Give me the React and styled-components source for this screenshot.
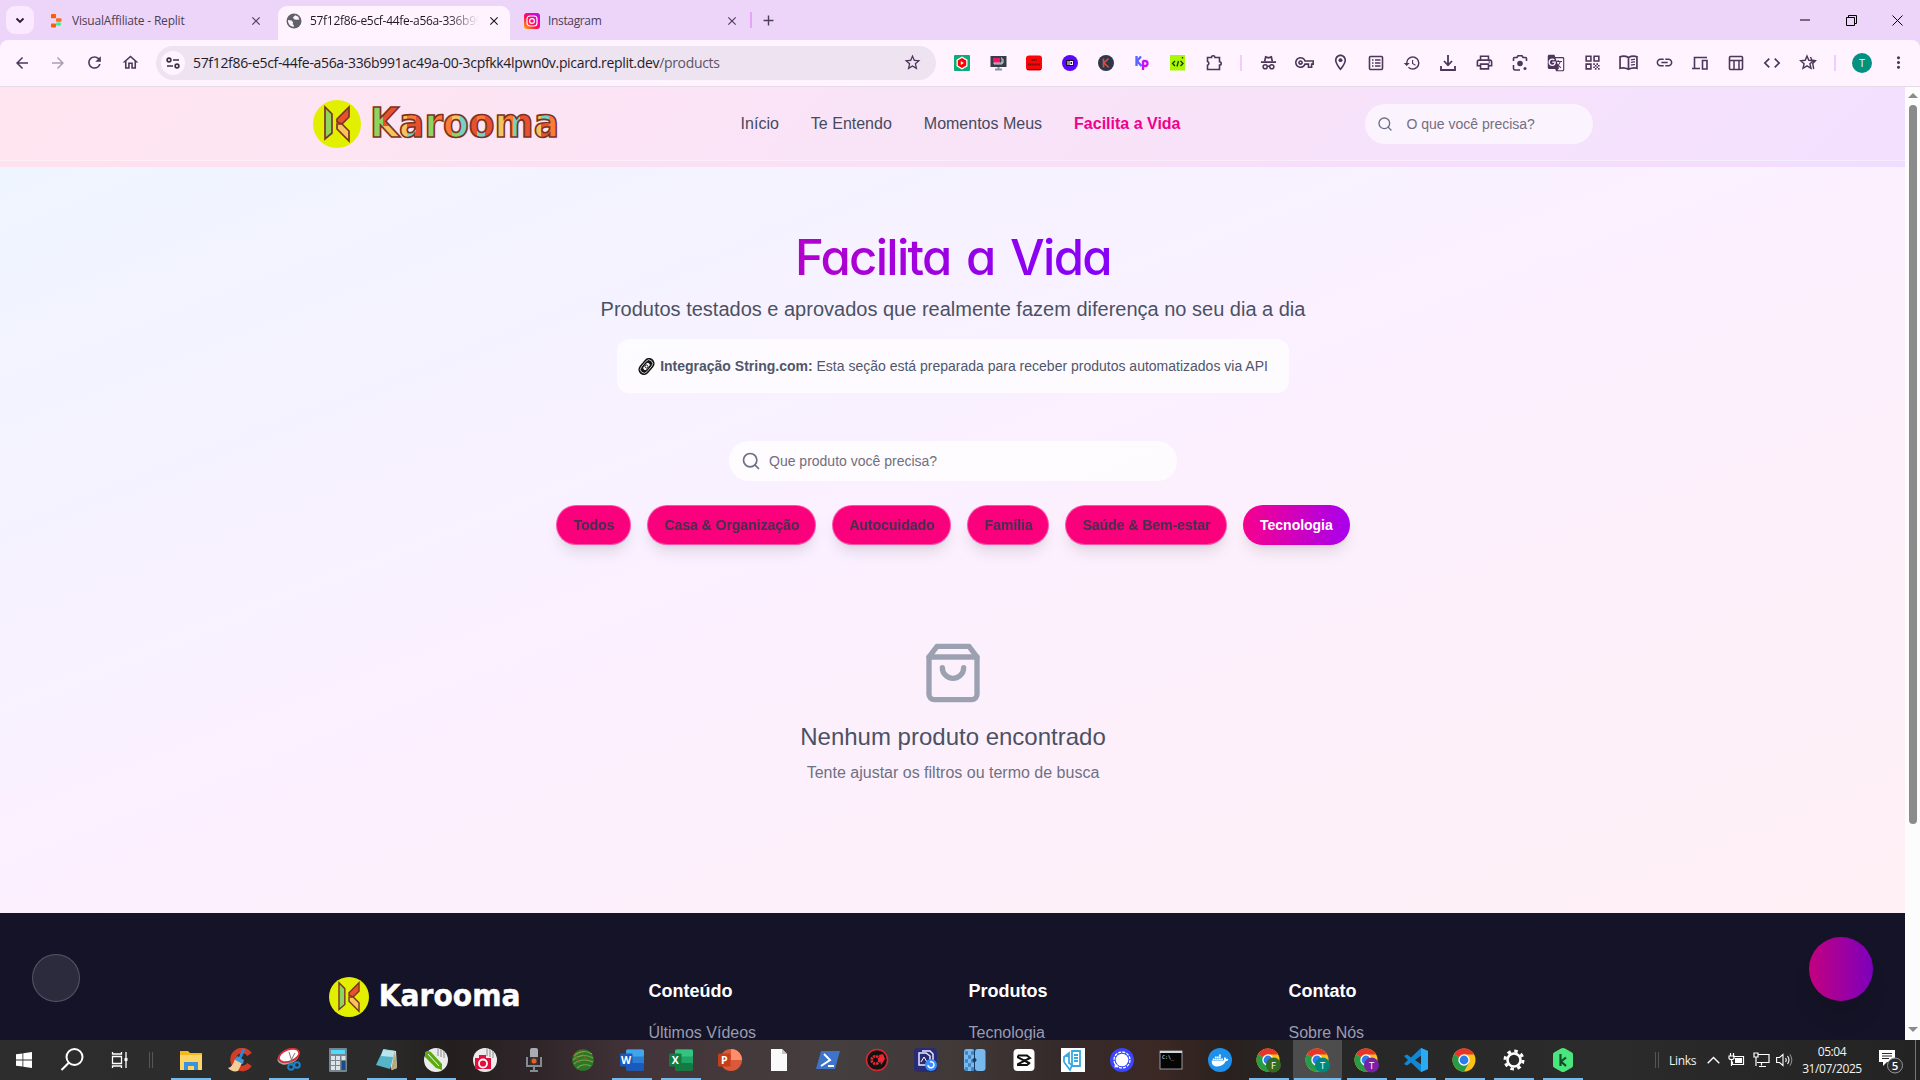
import React from "react";
import styled, { createGlobalStyle, css } from "styled-components";
import {
  MdArrowBack,
  MdArrowForward,
  MdRefresh,
  MdOutlineHome,
  MdOutlineVpnKey,
  MdOutlineLocationOn,
  MdHistory,
  MdOutlinePrint,
  MdGTranslate,
  MdQrCode,
  MdLink,
  MdCode,
  MdStarBorder,
  MdMoreVert,
  MdAdd,
  MdClose,
} from "react-icons/md";
import { FaDocker } from "react-icons/fa";

const ui = `"Open Sans", "Noto Sans", sans-serif`;
const arial = `"Liberation Sans", Arial, sans-serif`;

const Global = createGlobalStyle`
  * { box-sizing: border-box; }
  html, body { margin: 0; padding: 0; overflow: hidden; background: #fff; }
  p, h1, h2, h3 { margin: 0; font-weight: 400; }
  svg { display: block; flex: none; }
`;

const Screen = styled.div`
  width: 1920px;
  height: 1080px;
  display: flex;
  flex-direction: column;
  overflow: hidden;
  font-family: ${arial};
`;

/* ---------- browser frame ---------- */

const TabStrip = styled.div`
  height: 40px;
  flex: none;
  display: flex;
  align-items: flex-end;
  padding-left: 6px;
  background: #ecd5f8;
  font-family: ${ui};
`;
const TabMenu = styled.div`
  width: 28px;
  height: 28px;
  margin: 0 8px 6px 0;
  border-radius: 9px;
  background: #fbeaff;
  display: grid;
  place-items: center;
`;
const Tab = styled.div`
  width: ${(p) => p.$w}px;
  height: 34px;
  padding: 0 ${(p) => p.$end}px 5px ${(p) => p.$pad}px;
  display: flex;
  align-items: center;
  color: #4d3d57;
  ${(p) =>
    p.$active &&
    css`
      background: #fef3ff;
      border-radius: 9px 9px 0 0;
      color: #1f1a22;
    `}
`;
const TabLabel = styled.span`
  flex: 1;
  margin-left: ${(p) => p.$gap || 8}px;
  margin-right: 8px;
  overflow: hidden;
  white-space: nowrap;
  font-size: 12px;
  line-height: 18px;
  letter-spacing: ${(p) => p.$track || 0}px;
  ${(p) => p.$fade && css`mask-image: linear-gradient(90deg, #000 82%, transparent);`}
`;
const StripLine = styled.div`
  width: 2px;
  height: 16px;
  margin-bottom: 12px;
  background: #e3a6f7;
`;
const NewTab = styled.div`
  width: 32px;
  height: 40px;
  display: grid;
  place-items: center;
  color: #4d3d57;
`;
const WindowButtons = styled.div`
  margin-left: auto;
  height: 40px;
  display: flex;
`;
const WindowButton = styled.div`
  width: 46px;
  display: grid;
  place-items: center;
`;

const ToolbarBack = styled.div`
  height: 47px;
  flex: none;
  background: #ecd5f8;
`;
const Toolbar = styled.div`
  height: 47px;
  padding: 0 4px 1px 4px;
  display: flex;
  align-items: center;
  background: #fef3ff;
  border-bottom: 1px solid #e5dbe9;
  border-radius: 8px 8px 0 0;
  color: #4d3659;
  font-family: ${ui};
`;
const ToolCell = styled.div`
  width: 36px;
  height: 36px;
  flex: none;
  display: grid;
  place-items: center;
  opacity: ${(p) => (p.$dim ? 0.45 : 1)};
`;
const Omnibox = styled.div`
  width: 780px;
  height: 34px;
  margin: 0 8px 0 8px;
  padding: 0 14px 0 5px;
  display: flex;
  align-items: center;
  border-radius: 17px;
  background: #eee3f0;
`;
const SiteInfo = styled.div`
  width: 24px;
  height: 24px;
  border-radius: 50%;
  background: #fef3ff;
  display: grid;
  place-items: center;
`;
const Url = styled.div`
  flex: 1;
  margin-left: 8px;
  font-size: 14px;
  letter-spacing: -0.33px;
  color: #241c28;
  white-space: nowrap;
  span { color: #5f5366; }
`;
const ToolLine = styled.div`
  width: 2px;
  height: 16px;
  margin: 0 ${(p) => p.$r}px 0 ${(p) => p.$l}px;
  background: #f0cdfc;
`;
const Avatar = styled.div`
  width: 20px;
  height: 20px;
  border-radius: 50%;
  background: #009180;
  color: #e8fff9;
  font-size: 11px;
  line-height: 20px;
  text-align: center;
`;

/* ---------- site ---------- */

const Viewport = styled.div`
  height: 953px;
  flex: none;
  display: flex;
`;
const Page = styled.div`
  width: 1905px;
  height: 953px;
  overflow: hidden;
  position: relative;
`;
const Header = styled.header`
  height: 80px;
  background: linear-gradient(135deg, #ffe2ee, #f9e0f7 50%, #f1ddff);
`;
const HeaderRow = styled.div`
  height: 74px;
  padding: 0 312.5px;
  display: flex;
  align-items: center;
  border-bottom: 1px solid rgba(255, 255, 255, 0.35);
  background: rgba(255, 255, 255, 0.1);
`;
const Logo = styled.div`
  display: flex;
  align-items: center;
  gap: 12px;
`;
const Nav = styled.nav`
  margin-left: auto;
  display: flex;
  gap: 32px;
`;
const NavItem = styled.a`
  font-size: 16px;
  line-height: 24px;
  color: ${(p) => (p.$active ? "#f0008c" : "#454a5e")};
  font-weight: ${(p) => (p.$active ? 700 : 400)};
`;
const HeaderSearch = styled.div`
  width: 228px;
  height: 40px;
  margin-left: 184px;
  padding-left: 12px;
  display: flex;
  align-items: center;
  gap: 14px;
  border-radius: 20px;
  background: rgba(255, 255, 255, 0.6);
  font-size: 14px;
  color: #746f80;
`;
const Main = styled.main`
  height: 746px;
  padding-top: 61px;
  padding-left: 1px;
  display: flex;
  flex-direction: column;
  align-items: center;
  background: linear-gradient(to bottom right, #eff5ff, #fcf0ff 50%, #fff0f5);
`;
const Title = styled.h1`
  height: 60px;
  width: 1216px;
  text-align: center;
  font-family: Inter, sans-serif;
  font-feature-settings: "cv11", "ss03";
  font-size: 49px;
  line-height: 59px;
  font-weight: 500;
  letter-spacing: -1.7px;
  word-spacing: 4px;
  color: transparent;
  background: linear-gradient(90deg, #ff0080 0%, #8a00f5 58%, #7c00ff 100%);
  background-clip: text;
  -webkit-background-clip: text;
`;
const Lead = styled.p`
  margin-top: 7px;
  font-size: 20px;
  line-height: 28px;
  color: #4b5163;
`;
const Notice = styled.div`
  width: 672px;
  height: 54px;
  margin-top: 16px;
  border-radius: 12px;
  background: rgba(255, 255, 255, 0.7);
  display: flex;
  align-items: center;
  justify-content: center;
  gap: 5px;
  font-size: 14px;
  color: #50566a;
`;
const ProductSearch = styled.div`
  width: 448px;
  height: 40px;
  margin-top: 48px;
  padding-left: 12px;
  display: flex;
  align-items: center;
  gap: 8px;
  border-radius: 20px;
  background: rgba(255, 255, 255, 0.75);
  font-size: 14px;
  color: #716f7c;
`;
const Filters = styled.div`
  margin-top: 24px;
  display: flex;
  gap: 16px;
`;
const Chip = styled.button`
  height: 40px;
  padding: 0 ${(p) => (p.$active ? 17 : 16)}px;
  border: 1px solid rgba(255, 160, 210, 0.5);
  border-radius: 20px;
  background: #fb007c;
  box-shadow: 0 10px 15px -3px rgba(0, 0, 0, 0.1), 0 4px 6px -4px rgba(0, 0, 0, 0.1);
  font: 700 14px ${arial};
  letter-spacing: -0.03px;
  color: #48304f;
  ${(p) =>
    p.$active &&
    css`
      border: 0;
      background: linear-gradient(90deg, #f7008e, #a800ee);
      color: #fff;
    `}
`;
const Empty = styled.section`
  margin-top: 96px;
  display: flex;
  flex-direction: column;
  align-items: center;
`;
const EmptyTitle = styled.h3`
  margin-top: 16px;
  font-size: 24px;
  line-height: 32px;
  color: #4b5163;
`;
const EmptyText = styled.p`
  margin-top: 8px;
  font-size: 16px;
  line-height: 24px;
  color: #6e7183;
`;
const Footer = styled.footer`
  height: 127px;
  padding: 64px 328.5px 0;
  background: #151327;
  display: grid;
  grid-template-columns: repeat(4, 288px);
  column-gap: 32px;
  color: #9a9cae;
  font-size: 16px;
  line-height: 24px;
`;
const FooterText = styled.p`
  margin-top: 18px;
  white-space: nowrap;
`;
const FooterHead = styled.h3`
  font-size: 18px;
  line-height: 28px;
  font-weight: 700;
  color: #fff;
  margin-bottom: 16px;
`;
const FooterLink = styled.p`
  line-height: 24px;
`;
const FloatLeft = styled.div`
  position: absolute;
  left: 32px;
  top: 867px;
  width: 48px;
  height: 48px;
  border-radius: 50%;
  background: rgba(255, 255, 255, 0.1);
  border: 1px solid rgba(255, 255, 255, 0.2);
`;
const FloatRight = styled.div`
  position: absolute;
  right: 32px;
  top: 850px;
  width: 64px;
  height: 64px;
  border-radius: 50%;
  background: linear-gradient(90deg, #c3007f, #7d00bd);
  box-shadow: 0 20px 25px -5px rgba(0, 0, 0, 0.1);
`;
const Scrollbar = styled.div`
  width: 15px;
  background: #fcfcfc;
  display: flex;
  flex-direction: column;
  align-items: center;
  padding: 6px 0 8px;
`;
const Thumb = styled.div`
  width: 8px;
  height: 719px;
  margin-top: 7px;
  margin-bottom: auto;
  border-radius: 4px;
  background: #8b8b8b;
`;

/* ---------- taskbar ---------- */

const Taskbar = styled.div`
  height: 40px;
  flex: none;
  display: flex;
  align-items: stretch;
  font-family: ${ui};
  color: #f3f3f3;
  background: linear-gradient(
    90deg,
    #2d2d2d 0, #2b2b2b 380px, #241f1e 450px, #30262a 540px, #433439 640px, #453e3e 830px,
    #403938 960px, #352a2a 1060px, #3b2824 1160px, #29211e 1230px, #262626 1290px, #2b2b2b 1600px, #232323 1920px
  );
`;
const SystemCell = styled.div`
  width: 48px;
  display: grid;
  place-items: center;
`;
const Grip = styled.div`
  width: 4px;
  height: 16px;
  margin: 12px 13px 0 5px;
  border: solid #565656;
  border-width: 0 1px;
`;
const AppCell = styled.div`
  width: 49px;
  display: flex;
  flex-direction: column;
  align-items: center;
  justify-content: space-between;
  padding-top: 8px;
  background: ${(p) => (p.$focus ? "#4d4d4d" : "transparent")};
`;
const Underline = styled.div`
  width: ${(p) => (p.$wide ? 47 : 40)}px;
  height: 2px;
  background: ${(p) => (p.$on ? "#76b9ed" : "transparent")};
`;
const Tray = styled.div`
  margin-left: auto;
  display: flex;
  align-items: center;
  width: 265px;
`;
const TrayGrip = styled(Grip)`
  margin: 0 10px 0 0;
`;
const Links = styled.div`
  width: 37px;
  font-size: 12px;
  letter-spacing: -0.3px;
`;
const TrayIcon = styled.div`
  width: ${(p) => p.$w || 24}px;
  display: grid;
  place-items: center;
`;
const Clock = styled.div`
  width: 70px;
  font-size: 12px;
  line-height: 17px;
  letter-spacing: -0.4px;
  text-align: center;
  display: grid;
`;
const ShowDesktop = styled.div`
  height: 40px;
  width: 1px;
  margin-left: auto;
  margin-right: 4px;
  background: #777;
`;

/* ---------- drawings ---------- */

function Mark({ size }) {
  return (
    <svg width={size} height={size} viewBox="0 0 48 48">
      <circle cx="24" cy="24" r="24" fill="#e3ef00" />
      <g stroke="#7c3326" strokeWidth="1.7" strokeLinejoin="miter">
        <polygon points="12,7 19,14 19,33 12,39" fill="#8fd45f" />
        <polygon points="36,7 36,17 29,24 24,22 24,19" fill="#e8512f" />
        <polygon points="24,24 29,24 36,31 36,41 24,29" fill="#f7c35c" />
      </g>
    </svg>
  );
}

const tiles = [
  [0, 0, 10, 40, "#8fd45f"], [10, 0, 16, 20, "#e8512f"], [10, 20, 16, 20, "#f7c35c"],
  [26, 0, 8, 40, "#f7c35c"], [34, 0, 9, 17, "#ff7a35"], [34, 17, 9, 7, "#e8512f"], [34, 24, 9, 16, "#74d3c6"], [43, 0, 9, 40, "#e8512f"],
  [52, 0, 8, 40, "#8fd45f"], [60, 0, 11, 40, "#ff7a35"],
  [71, 0, 8, 40, "#ff7a35"], [79, 0, 8, 18, "#f7c35c"], [79, 18, 8, 22, "#8fd45f"], [87, 0, 9, 40, "#74d3c6"],
  [96, 0, 8, 40, "#e8512f"], [104, 0, 8, 18, "#ff7a35"], [104, 18, 8, 22, "#74d3c6"], [112, 0, 9, 40, "#e8512f"],
  [121, 0, 10, 40, "#f7c35c"], [131, 0, 9, 40, "#ff7a35"], [140, 0, 7, 40, "#74d3c6"], [147, 0, 12, 40, "#e8512f"],
  [159, 0, 9, 40, "#f7c35c"], [168, 0, 8, 18, "#74d3c6"], [168, 18, 8, 22, "#e8512f"], [176, 0, 14, 40, "#ff7a35"],
];

const WordmarkSvg = styled.svg`
  overflow: visible;
`;

function Wordmark({ width, colored }) {
  return (
    <WordmarkSvg width={width} height={(width * 36) / 184} viewBox="0 0 184 36">
      <defs>
        <pattern id="mosaic" patternUnits="userSpaceOnUse" width="190" height="40">
          {tiles.map(([x, y, w, h, c], i) => (
            <rect key={i} x={x} y={y} width={w} height={h} fill={c} />
          ))}
        </pattern>
      </defs>
      <text
        x="-3"
        y={colored ? 31 : 29.5}
        textLength="189"
        lengthAdjust="spacingAndGlyphs"
        fontFamily="DejaVu Sans, sans-serif"
        fontWeight="700"
        fontSize="40"
        fill={colored ? "url(#mosaic)" : "#fff"}
        stroke={colored ? "#7c3326" : "#fff"}
        strokeWidth={colored ? 1.7 : 0.6}
      >
        Karooma
      </text>
    </WordmarkSvg>
  );
}

const Magnifier = ({ s = 16 }) => (
  <svg width={s} height={s} viewBox="0 0 24 24" fill="none" stroke="#697083" strokeWidth="2" strokeLinecap="round">
    <circle cx="11" cy="11" r="8" />
    <path d="m21 21-4.3-4.3" />
  </svg>
);

const ChainLink = () => (
  <svg width="17" height="17" viewBox="0 0 17 17" fill="none">
    <g transform="rotate(-50 8.5 8.5)">
      <rect x="-1" y="3" width="19" height="11" rx="5.500" fill="#111" />
      <rect x="1" y="4.800" width="15" height="7.400" rx="3.700" stroke="#fff" strokeWidth=".7" />
      <rect x="4" y="6" width="9" height="5" rx="2.500" fill="#fff" stroke="#111" />
      <circle cx="8.500" cy="8.500" r="1.500" stroke="#111" strokeWidth=".9" />
    </g>
  </svg>
);

const Icon18 = ({ children, s = 18 }) => (
  <svg width={s} height={s} viewBox="0 0 18 18" fill="none" stroke="currentColor" strokeWidth="1.6">
    {children}
  </svg>
);

const Globe = () => (
  <svg width="16" height="16" viewBox="0 0 16 16">
    <circle cx="8" cy="8" r="7.5" fill="#5f6368" />
    <path d="M9.5 2.2 7 4.3l1 1.9 2 .6 3.4-.4-1.2-2.6zM2 7l3.6.6 1.6 2-.6 1.4L8 12.4l-.6 1.5C4 13.4 1.8 10.400 2 7z" fill="#fef3ff" />
  </svg>
);

const Replit = () => (
  <svg width="12" height="14" viewBox="0 0 12 14">
    <rect x="1" y="0" width="5" height="4.200" rx=".8" fill="#ff5a0a" />
    <rect x="6" y="4.200" width="5.500" height="3.600" rx=".8" fill="#ff6a1b" />
    <rect x="6" y="8.200" width="5" height="3.600" rx="1.500" fill="#41ef8b" />
    <rect x="1" y="9.500" width="5" height="4" rx=".8" fill="#ff5a0a" />
  </svg>
);

const Instagram = () => (
  <svg width="16" height="16" viewBox="0 0 16 16">
    <defs>
      <linearGradient id="insta" x1="0" y1="1" x2="1" y2="0">
        <stop offset="0" stopColor="#ffb800" />
        <stop offset=".4" stopColor="#ff0f55" />
        <stop offset=".75" stopColor="#e800c0" />
        <stop offset="1" stopColor="#9b1bff" />
      </linearGradient>
    </defs>
    <rect width="16" height="16" rx="3" fill="url(#insta)" />
    <rect x="3" y="3" width="10" height="10" rx="3" fill="none" stroke="#fff" strokeWidth="1.200" />
    <circle cx="8" cy="8" r="2.400" fill="none" stroke="#fff" strokeWidth="1.200" />
  </svg>
);

const extensions = [
  <svg width="16" height="16" viewBox="0 0 16 16"><rect width="16" height="16" rx="1" fill="#0cab7c" /><path d="M8 1.500 13.500 4.700v6.600L8 14.500l-5.500-3.200V4.700z" fill="#fff" /><path d="M8 3 12.200 5.500v5L8 13l-4.200-2.500v-5z" fill="#f00" /><path d="m6.800 6 3 2-3 2z" fill="#fff" /></svg>,
  <svg width="17" height="16" viewBox="0 0 17 16"><rect x=".5" y="1" width="16" height="11" fill="#353c4c" /><rect x="3" y="3" width="7" height="5" fill="#f5146c" /><path d="M11 3h1v6H4V8h9V4" stroke="#ccc" fill="none" /><path d="M5 14.500h7M8.500 12v2" stroke="#8593a8" strokeWidth="2" /></svg>,
  <svg width="16" height="16" viewBox="0 0 16 16"><rect y=".5" width="16" height="15" rx="3" fill="#fb0508" /><path d="M5.500 5h5M2 9.500h12" stroke="#781010" strokeWidth="2.200" strokeDasharray="1.500 .6" /><path d="M1 14.500h14" stroke="#222" /></svg>,
  <svg width="16" height="16" viewBox="0 0 16 16"><circle cx="8" cy="8" r="8" fill="#5b05ff" /><rect x="4" y="5" width="8" height="6" rx="1" fill="#111" /><path d="M6 6v4M8 6.500h2.500v3H8z" stroke="#fff" fill="none" strokeWidth="1.100" /></svg>,
  <svg width="16" height="16" viewBox="0 0 16 16"><circle cx="8" cy="8" r="8" fill="#29394a" /><path d="M5.500 3.500v9M10.500 3.500 6 8l4.800 4.500" stroke="#e04840" strokeWidth="1.700" fill="none" /></svg>,
  <svg width="16" height="16" viewBox="0 0 16 16" fill="none" strokeWidth="2.300"><path d="M2.500 1v10M7 1.500 3 6l4.500 5" stroke="#5b62ff" /><path d="M9 5.500V15M9 6h2a2.200 2.200 0 0 1 0 5H9" stroke="#c911f5" /></svg>,
  <svg width="16" height="16" viewBox="0 0 16 16"><rect width="15" height="15.500" fill="#a8f900" /><path d="M5 6 2.500 8.500 5 11M10.500 6 13 8.500 10.500 11M8.500 6 7 11.500M12.500 2v1.500" stroke="#1d3000" strokeWidth="1.300" fill="none" /></svg>,
  <Icon18><path d="M2.500 3.500h4a1.700 1.700 0 0 1 3.400 0h4.600v4.200a1.700 1.700 0 0 1 0 3.400v4.400h-12v-4.300a2 2 0 0 0 0-3.800z" /></Icon18>,
];

const tools = [
  <Icon18 s={17}><path d="M5 7.500 6 3l3 1 3-1 1 4.500M1 8.500h16" strokeWidth="1.800" /><circle cx="5.500" cy="13.500" r="2.200" /><circle cx="12.500" cy="13.500" r="2.200" /><path d="M7.700 13h2.600" /></Icon18>,
  <MdOutlineVpnKey size={19} />,
  <MdOutlineLocationOn size={19} />,
  <Icon18><rect x="2.500" y="2.500" width="13" height="13" rx="1" /><path d="M5 6h1.500M8 6h5.500M5 9h1.500M8 9h5.500M5 12h1.500M8 12h5.500" /></Icon18>,
  <MdHistory size={18} />,
  <Icon18><path d="M9 1v10M5 7l4 4.300L13 7M2 12v4h14v-4" strokeWidth="1.800" /></Icon18>,
  <MdOutlinePrint size={19} />,
  <Icon18><path d="M2.500 7V4.500a1 1 0 0 1 1-1H6l1-1.700h4l1 1.700h2.500a1 1 0 0 1 1 1V7M2.500 11v3.500a1.500 1.500 0 0 0 1.500 1.500H9" /><circle cx="9" cy="9.500" r="2.800" fill="currentColor" stroke="none" /><circle cx="14" cy="14.500" r="1.500" fill="currentColor" stroke="none" /></Icon18>,
  <MdGTranslate size={18} />,
  <MdQrCode size={19} />,
  <Icon18 s={19}><path d="M9 4.200Q5 2 1 3.500v11q4-1.200 8 1 4-2.200 8-1v-11Q13 2 9 4.200zM9 4v11.500" /><path d="M11.300 6.500q2-.7 3.800-.4M11.300 9q2-.7 3.800-.4M11.300 11.500q2-.7 3.800-.4" strokeWidth="1.200" /></Icon18>,
  <MdLink size={19} />,
  <Icon18><path d="M1 14.500h8M3.500 14V3.500H16M11.500 6.500H16v8.500h-4.500z" /></Icon18>,
  <Icon18><rect x="2.500" y="2.500" width="13" height="13" rx="1" /><path d="M2.500 6.500h13M7 6.500v9M12 6.500v9" strokeWidth="1.500" /></Icon18>,
  <MdCode size={20} />,
  <Icon18><path d="m8 2 1.800 4.300 4.700.4-3.600 3 1.100 4.600L8 11.900l-4 2.400 1.100-4.600-3.600-3 4.700-.4zM11.500 3l1.200 3 3.800.7-2.800 2.800 1 5.500" strokeWidth="1.400" /></Icon18>,
];

const Chrome = ({ badge, color }) => (
  <svg width="25" height="25" viewBox="0 0 25 25">
    <circle cx="12" cy="12" r="11.500" fill="#fbc116" />
    <path d="M12 12 2 6.300A11.500 11.500 0 0 1 22 6.300L22 6.500H12z" fill="#e8352b" />
    <path d="M2 6.300A11.500 11.500 0 0 0 12 23.500l5-8.700L12 12z" fill="#269b48" />
    <circle cx="12" cy="12" r="5.700" fill="#fff" />
    <circle cx="12" cy="12" r="4.400" fill="#2f7bea" />
    {badge && (
      <>
        <circle cx="17.500" cy="17" r="7.500" fill={color} />
        <text x="17.500" y="20.500" textAnchor="middle" fontFamily="Open Sans, sans-serif" fontSize="9.500" fill="#fff">{badge}</text>
      </>
    )}
  </svg>
);

const Office = ({ letter, a, b, c, round }) => (
  <svg width="24" height="24" viewBox="0 0 24 24">
    {round ? (
      <><circle cx="13" cy="12" r="11" fill={b} /><path d="M13 1a11 11 0 0 1 11 11H13z" fill={a} /></>
    ) : (
      <><rect x="6" y="1.500" width="18" height="21" rx="1.500" fill={b} /><rect x="6" y="1.500" width="18" height="7" rx="1.500" fill={a} /><rect x="6" y="15" width="18" height="7.500" rx="1.500" fill={c} /></>
    )}
    <rect x="0" y="5.500" width="12.500" height="13" rx="1.200" fill={c} />
    <text x="6.200" y="16" textAnchor="middle" fontFamily="Open Sans, sans-serif" fontWeight="700" fontSize="10.500" fill="#fff">{letter}</text>
  </svg>
);

const S = ({ children }) => <svg width="24" height="24" viewBox="0 0 24 24">{children}</svg>;

const Balloon = ({ children }) => (
  <S>
    <circle cx="12" cy="12" r="12" fill="#ececec" />
    <path d="M14 0v8M17 1v8M20 3v7" stroke="#aaa" strokeWidth="1.500" />
    {children}
  </S>
);

const apps = [
  { on: 1, icon: <S><path d="M1 3h8l2 2h12v17H1z" fill="#f5b91f" /><path d="M1 7h22v15H1z" fill="#ffd567" /><path d="M5 14h14v8h-4v-4H9v4H5z" fill="#3a94da" /></S> },
  { icon: <S><path d="M22 8A9 9 0 1 0 22 18" fill="none" stroke="#d33c26" strokeWidth="5.500" transform="translate(-.5 -1.500)" /><path d="M16 1 12 10" stroke="#2d89d6" strokeWidth="3" /><path d="m7 11 7 4-4 8c-4 1-7 0-10-3 4-1 5-4 7-9z" fill="#f3cf97" /><path d="m9 8 7 4-1 4-8-4z" fill="#3e96dc" /></S> },
  { on: 1, icon: <S><ellipse cx="11" cy="9.500" rx="11" ry="6.500" transform="rotate(-20 11 9)" fill="#a6a6a6" /><ellipse cx="12" cy="7.500" rx="10.500" ry="6" transform="rotate(-20 12 7.500)" fill="#fff" stroke="#d82c35" strokeWidth="1.800" /><path d="m12 4 4 13M18 5l-6 11" stroke="#777" /><circle cx="14" cy="19" r="2.800" fill="none" stroke="#1683cc" strokeWidth="2" /><circle cx="20" cy="17" r="2.800" fill="none" stroke="#1683cc" strokeWidth="2" /></S> },
  { icon: <S><rect x="3" width="18" height="24" rx="1" fill="#79858e" /><rect x="5" y="2" width="14" height="4" fill="#4ddcff" /><path d="M5 10h9M5 15h9M5 20h9" stroke="#dde3e7" strokeWidth="4" strokeDasharray="4 1" /><path d="M17.500 8v4" stroke="#dde3e7" strokeWidth="4" /><path d="M17.500 13v9" stroke="#174d88" strokeWidth="4" /></S> },
  { on: 1, icon: <S><path d="m8 1 13 2 1 17-5 2z" fill="#dde5e4" /><path d="M8 2 20 3l-5 18L1 17z" fill="#54b5c9" /><path d="M8 2 20 3l-2 6-12-1z" fill="#b9e6ec" /><path d="m20 3 2 17-6 2z" fill="#b9a87a" /></S> },
  { on: 1, icon: <Balloon><path d="M1 4q3-2 6 0l11 12v6l-6-2L1 9z" fill="#5dab13" /><path d="m4 6 11 12" stroke="#fff" /></Balloon> },
  { icon: <Balloon><path d="M2 10h4V7h7v3h5v11H2z" fill="#e00f3c" /><circle cx="10" cy="15.500" r="4" fill="#e00f3c" stroke="#fff" strokeWidth="1.800" /></Balloon> },
  { icon: <S><rect x="8" y="0" width="8" height="17" rx="2" fill="#a6acb2" /><path d="M5 9v9h14V9M12 18v4M8 23h8" stroke="#858b92" strokeWidth="2" fill="none" /><rect x="8" y="9" width="8" height="8" fill="#353535" /><circle cx="12" cy="13" r="2.500" fill="#f05c22" /></S> },
  { icon: <S><circle cx="12" cy="12" r="10.800" fill="#2f7427" /><path d="M3 8c5-5 12-6 18-2M2 12c5-5 13-6 20-2M3 16c5-5 13-5 19-2M6 20c4-4 10-4 14-2" stroke="#76a843" strokeWidth="1.100" fill="none" /><path d="m3 6 6 9M9 2l7 10" stroke="#a05a2c" /></S> },
  { on: 1, wide: 1, icon: <Office letter="W" a="#41a5ee" b="#2b7cd3" c="#185abd" /> },
  { on: 1, icon: <Office letter="X" a="#33c481" b="#21a366" c="#107c41" /> },
  { icon: <Office letter="P" a="#ff8f6b" b="#d9593a" c="#c43e1c" round /> },
  { icon: <S><path d="M4 1h11l5 5v17H4z" fill="#fafafa" /><path d="M15 1v5h5z" fill="#c7c7c7" /></S> },
  { icon: <S><path d="M5 3h19l-5 18H0z" fill="#3d74c9" /><path d="m8 6 6 6-9 6M12 18h6" stroke="#fff" strokeWidth="2" fill="none" /></S> },
  { icon: <S><circle cx="12" cy="12" r="10.500" fill="#111" stroke="#db2730" strokeWidth="1.500" /><circle cx="10.500" cy="12" r="3.800" fill="none" stroke="#ed2834" strokeWidth="2.600" strokeDasharray="2.200 .8" /><path d="m14 7 4-1 2 5-4 6z" fill="#ed2834" /></S> },
  { icon: <S><rect width="23" height="24" rx="4" fill="#292b75" /><path d="M5 5h7l4 3v9H5zM8 3h8l3 3v8" stroke="#e7e9ff" fill="none" strokeWidth="1.500" /><path d="M7 14 10 9l3 5" stroke="#fff" fill="none" /><circle cx="17" cy="17" r="6" fill="#388dff" /><path d="M14 17a3 3 0 1 0 2-3" stroke="#fff" fill="none" strokeWidth="1.500" /></S> },
  { icon: <S><rect x="1" y="1" width="10.500" height="22" rx="3" fill="#79b9ee" /><path d="M2 5h9M2 13h9M2 21h9" stroke="#3f83bf" strokeWidth="3.500" strokeDasharray="3 3" /><path d="M2 9h9M2 17h9" stroke="#3f83bf" strokeWidth="3.500" strokeDasharray="3 3" strokeDashoffset="3" /><rect x="12" y="1" width="10.500" height="22" rx="3" fill="#78b9ed" /><path d="M11.500 0v24" stroke="#183c61" /><circle cx="11.500" cy="12" r="2" fill="#183c61" /></S> },
  { icon: <S><rect x="1.500" y="1" width="21" height="22" rx="4" fill="#fff" /><path d="M6 7.500h9l3 2.500-12 6v1h9l3-2.500M6 7.500v2l12 6" stroke="#111" strokeWidth="2" fill="none" /></S> },
  { icon: <S><rect width="24" height="24" fill="#fff" /><path d="M11 3h8v15h-8zM13 7h4M13 10h4M13 13h4" stroke="#38a9e0" strokeWidth="1.800" fill="none" /><path d="M3 14V9l5-4v10l3 2-2 5-6-8M8 8H5" stroke="#38a9e0" strokeWidth="1.800" fill="none" /></S> },
  { icon: <S><circle cx="12" cy="12" r="12" fill="#3a45fd" /><circle cx="12" cy="12" r="6.300" fill="#fff" /><circle cx="12" cy="12" r="8" fill="none" stroke="#fff" strokeWidth="1.300" strokeDasharray="3 1.200" /><path d="m5 15-.5 4.500L9 19z" fill="#fff" /></S> },
  { icon: <S><rect x="1" y="3" width="22" height="18" fill="#050505" stroke="#999" /><path d="M1 4h22" stroke="#cfd6dc" strokeWidth="2" /><text x="3" y="11" fontFamily="DejaVu Sans Mono, monospace" fontSize="5" fill="#eee">C:\_</text></S> },
  { icon: <S><circle cx="12" cy="12" r="12" fill="#1d90ed" /><g transform="translate(3.500 4)" color="#fff"><FaDocker size={17} /></g></S> },
  { on: 1, icon: <Chrome badge="F" color="#336b24" /> },
  { on: 1, focus: 1, wide: 1, icon: <Chrome badge="T" color="#00877c" /> },
  { on: 1, icon: <Chrome badge="T" color="#7a20a5" /> },
  { on: 1, icon: <S><path d="M17 0 7 9.500 3 6.500 0 8l4 4-4 4 3 1.500 4-3L17 24l7-3V3zM18 7v10l-7-5z" fill="#1287d2" fillRule="evenodd" /><path d="m17 0 7 3v18l-7 3z" fill="#2aaaf2" /></S> },
  { on: 1, icon: <Chrome /> },
  { on: 1, icon: <S><circle cx="12" cy="12" r="6.500" fill="none" stroke="#fff" strokeWidth="2.600" /><circle cx="12" cy="12" r="9" fill="none" stroke="#fff" strokeWidth="3" strokeDasharray="3.500 3.570" /></S> },
  { on: 1, icon: <S><path d="M12 0q1 0 2 .6l7 4q1 .6 1 2v11q0 1.400-1 2l-7 4q-2 1-4 0l-7-4q-1-.6-1-2v-11q0-1.400 1-2l7-4Q11 0 12 0z" fill="#4ae57c" /><path d="M9.500 6v12M15 9.500l-5 4 5 4.500" stroke="#14482c" strokeWidth="2.200" fill="none" /></S> },
];

const filters = ["Todos", "Casa & Organização", "Autocuidado", "Família", "Saúde & Bem-estar", "Tecnologia"];

export default function App() {
  return (
    <Screen>
      <Global />
      <TabStrip>
        <TabMenu>
          <svg width="10" height="10" viewBox="0 0 10 10" fill="none" stroke="#2b2030" strokeWidth="1.900"><path d="m1.500 3.500 3.500 3.500 3.500-3.500" /></svg>
        </TabMenu>
        <Tab $w={236} $pad={8} $end={15}>
          <Replit />
          <TabLabel $gap={10} $track={-0.2}>VisualAffiliate - Replit</TabLabel>
          <MdClose size={14} />
        </Tab>
        <Tab $w={232} $pad={8} $end={9} $active>
          <Globe />
          <TabLabel $track={-0.3} $fade>57f12f86-e5cf-44fe-a56a-336b991ac49a</TabLabel>
          <MdClose size={14} />
        </Tab>
        <Tab $w={240} $pad={14} $end={11}>
          <Instagram />
          <TabLabel $track={-0.35}>Instagram</TabLabel>
          <MdClose size={14} />
        </Tab>
        <StripLine />
        <NewTab><MdAdd size={17} /></NewTab>
        <WindowButtons>
          <WindowButton><svg width="10" height="10"><path d="M0 5h10" stroke="#000" /></svg></WindowButton>
          <WindowButton><svg width="11" height="11" fill="none" stroke="#000"><path d="M.5 2.500h8v8h-8zM2.500 2.500v-2h8v8h-2" /></svg></WindowButton>
          <WindowButton><svg width="11" height="11" stroke="#000"><path d="m.5.5 10 10m0-10-10 10" /></svg></WindowButton>
        </WindowButtons>
      </TabStrip>

      <ToolbarBack>
        <Toolbar>
          <ToolCell><MdArrowBack size={18} /></ToolCell>
          <ToolCell $dim><MdArrowForward size={18} /></ToolCell>
          <ToolCell><MdRefresh size={19} /></ToolCell>
          <ToolCell><MdOutlineHome size={19} /></ToolCell>
          <Omnibox>
            <SiteInfo>
              <svg width="14" height="12" viewBox="0 0 14 12" fill="none" stroke="#3d2e46" strokeWidth="1.600"><circle cx="3" cy="3" r="1.900" /><path d="M7 3h6M1 9h6" /><circle cx="11" cy="9" r="1.900" /></svg>
            </SiteInfo>
            <Url>57f12f86-e5cf-44fe-a56a-336b991ac49a-00-3cpfkk4lpwn0v.picard.replit.dev<span>/products</span></Url>
            <MdStarBorder size={19} />
          </Omnibox>
          {extensions.map((e, i) => <ToolCell key={i}>{e}</ToolCell>)}
          <ToolLine $l={8} $r={8} />
          {tools.map((e, i) => <ToolCell key={i}>{e}</ToolCell>)}
          <ToolLine $l={8} $r={8} />
          <ToolCell><Avatar>T</Avatar></ToolCell>
          <ToolCell><MdMoreVert size={19} /></ToolCell>
        </Toolbar>
      </ToolbarBack>

      <Viewport>
        <Page>
          <Header>
            <HeaderRow>
              <Logo>
                <Mark size={48} />
                <Wordmark width={184} colored />
              </Logo>
              <Nav>
                <NavItem>Início</NavItem>
                <NavItem>Te Entendo</NavItem>
                <NavItem>Momentos Meus</NavItem>
                <NavItem $active>Facilita a Vida</NavItem>
              </Nav>
              <HeaderSearch><Magnifier />O que você precisa?</HeaderSearch>
            </HeaderRow>
          </Header>
          <Main>
            <Title>Facilita a Vida</Title>
            <Lead>Produtos testados e aprovados que realmente fazem diferença no seu dia a dia</Lead>
            <Notice>
              <ChainLink />
              <span><b>Integração String.com:</b> Esta seção está preparada para receber produtos automatizados via API</span>
            </Notice>
            <ProductSearch><Magnifier s={20} />Que produto você precisa?</ProductSearch>
            <Filters>
              {filters.map((f) => <Chip key={f} $active={f === "Tecnologia"}>{f}</Chip>)}
            </Filters>
            <Empty>
              <svg width="64" height="64" viewBox="0 0 24 24" fill="none" stroke="#9ca1b2" strokeWidth="2" strokeLinecap="round" strokeLinejoin="round">
                <path d="M6 2 3 6v14a2 2 0 0 0 2 2h14a2 2 0 0 0 2-2V6l-3-4Z" />
                <path d="M3 6h18" />
                <path d="M16 10a4 4 0 0 1-8 0" />
              </svg>
              <EmptyTitle>Nenhum produto encontrado</EmptyTitle>
              <EmptyText>Tente ajustar os filtros ou termo de busca</EmptyText>
            </Empty>
          </Main>
          <Footer>
            <div>
              <Logo>
                <Mark size={40} />
                <Wordmark width={138} />
              </Logo>
              <FooterText>Sua plataforma completa para conteúdo</FooterText>
            </div>
            <div><FooterHead>Conteúdo</FooterHead><FooterLink>Últimos Vídeos</FooterLink></div>
            <div><FooterHead>Produtos</FooterHead><FooterLink>Tecnologia</FooterLink></div>
            <div><FooterHead>Contato</FooterHead><FooterLink>Sobre Nós</FooterLink></div>
          </Footer>
          <FloatLeft />
          <FloatRight />
        </Page>
        <Scrollbar>
          <svg width="10" height="5"><path d="M5 0 10 5H0z" fill="#8b8b8b" /></svg>
          <Thumb />
          <svg width="10" height="5"><path d="M0 0h10L5 5z" fill="#8b8b8b" /></svg>
        </Scrollbar>
      </Viewport>

      <Taskbar>
        <SystemCell><svg width="16" height="16" viewBox="0 0 16 16" fill="#fff"><path d="M0 2.300 6.500 1.400v6.200H0zM7.300 1.300 16 0v7.600H7.300zM0 8.400h6.500v6.200L0 13.700zM7.300 8.400H16V16l-8.700-1.300z" /></svg></SystemCell>
        <SystemCell><svg width="24" height="24" viewBox="0 0 24 24" fill="none" stroke="#fff" strokeWidth="2"><circle cx="14.500" cy="9" r="8" /><path d="M8.800 14.700 1.500 22" /></svg></SystemCell>
        <SystemCell><svg width="18" height="18" viewBox="0 0 18 18" fill="none" stroke="#fff" strokeWidth="1.300"><path d="M1.500 5.500h9v7h-9zM1.500 1v2h9V1M1.500 17v-2h9v2M15 1v16" /><path d="M13.500 7h3v3h-3z" fill="#fff" stroke="none" /></svg></SystemCell>
        <Grip />
        {apps.map((a, i) => (
          <AppCell key={i} $focus={a.focus}>
            {a.icon}
            <Underline $on={a.on} $wide={a.focus} />
          </AppCell>
        ))}
        <Tray>
          <TrayGrip />
          <Links>Links</Links>
          <TrayIcon $w={15}><svg width="13" height="8" fill="none" stroke="#fff" strokeWidth="1.400"><path d="M.7 7.300 6.500 1.500l5.800 5.800" /></svg></TrayIcon>
          <TrayIcon $w={31}><svg width="17" height="14" viewBox="0 0 17 14" fill="none" stroke="#fff" strokeWidth="1.200"><path d="M5 3.500h10.500v8H4.500V8.500M2.500 0v3M5.500 0v3M1 3h5v2q0 1.500-2.500 1.500T1 5zM3.500 7v6" /><path d="M7 5h7v5H7z" fill="#fff" stroke="none" /></svg></TrayIcon>
          <TrayIcon $w={19}><svg width="17" height="16" viewBox="0 0 17 16" fill="none" stroke="#fff" strokeWidth="1.200"><path d="M5 2.500h11v8H4M8.500 10.500v3M6 14.500h7M1 1h4v4H1zM3 5v9" /></svg></TrayIcon>
          <TrayIcon $w={26}><svg width="17" height="14" viewBox="0 0 17 14" fill="none" stroke="#fff" strokeWidth="1.100"><path d="M.6 4.500h3L7 1.500v11L3.600 9.500h-3zM9.500 5q1.500 2 0 4M11.500 3q3 4 0 8" /><path d="M13.800 1.200q4 5.800 0 11.600" stroke="#888" /></svg></TrayIcon>
          <Clock><span>05:04</span><span>31/07/2025</span></Clock>
          <TrayIcon $w={46}>
            <svg width="26" height="28" viewBox="0 0 26 28">
              <path d="M2 4h16v12h-8l-4 4v-4H2z" fill="#fff" />
              <path d="M5 7.500h10M5 10h10M5 12.500h7" stroke="#2b2b2b" />
              <circle cx="18" cy="19.500" r="7.500" fill="#2b2b2b" stroke="#999" />
              <text x="18" y="23.800" textAnchor="middle" fontFamily="Open Sans, sans-serif" fontWeight="600" fontSize="11.500" fill="#fff">5</text>
            </svg>
          </TrayIcon>
          <ShowDesktop />
        </Tray>
      </Taskbar>
    </Screen>
  );
}
